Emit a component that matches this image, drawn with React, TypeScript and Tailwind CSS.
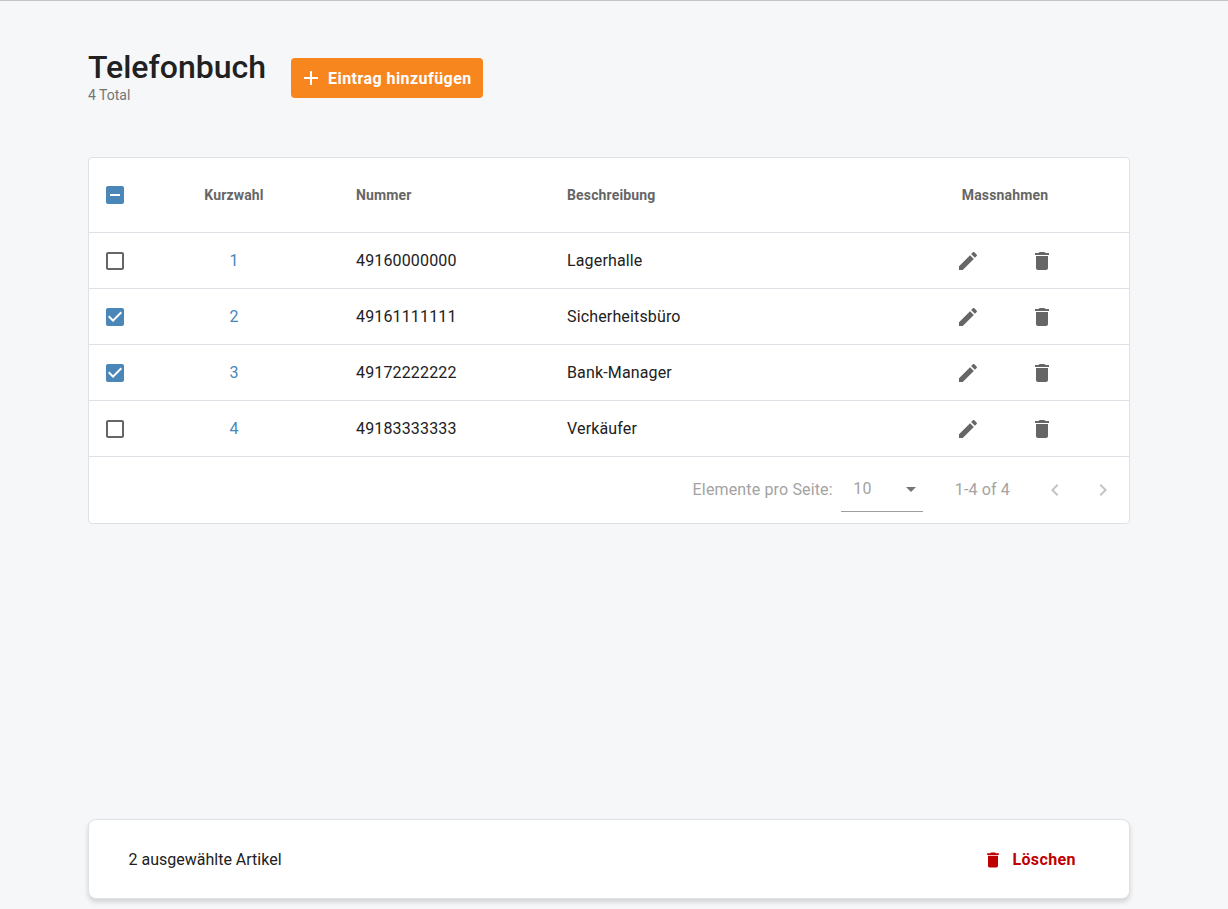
const ICONS = {
  plus: 'M19 13h-6v6h-2v-6H5v-2h6V5h2v6h6v2z',
  edit: 'M3 17.25V21h3.75L17.81 9.94l-3.75-3.75L3 17.25zM20.71 7.04c.39-.39.39-1.02 0-1.41l-2.34-2.34c-.39-.39-1.02-.39-1.41 0l-1.83 1.83 3.75 3.75 1.83-1.83z',
  trash: 'M6 19c0 1.1.9 2 2 2h8c1.1 0 2-.9 2-2V7H6v12zM19 4h-3.5l-1-1h-5l-1 1H5v2h14V4z',
  blank: 'M19 5v14H5V5h14m0-2H5c-1.1 0-2 .9-2 2v14c0 1.1.9 2 2 2h14c1.1 0 2-.9 2-2V5c0-1.1-.9-2-2-2z',
  checked: 'M19 3H5c-1.11 0-2 .9-2 2v14c0 1.1.89 2 2 2h14c1.11 0 2-.9 2-2V5c0-1.1-.89-2-2-2zm-9 14l-5-5 1.41-1.41L10 14.17l7.59-7.59L19 8l-9 9z',
  partial: 'M19 3H5c-1.1 0-2 .9-2 2v14c0 1.1.9 2 2 2h14c1.1 0 2-.9 2-2V5c0-1.1-.9-2-2-2zm-2 10H7v-2h10v2z',
  left: 'M15.41 7.41L14 6l-6 6 6 6 1.41-1.41L10.83 12z',
  right: 'M10 6L8.59 7.41 13.17 12l-4.58 4.59L10 18l6-6z',
  drop: 'M7 10l5 5 5-5z',
};

const Icon = ({ d, className }: { d: string; className: string }) => (
  <svg viewBox="0 0 24 24" className={className} fill="currentColor">
    <path d={d} />
  </svg>
);

const rows = [
  { id: 1, nummer: '49160000000', text: 'Lagerhalle', selected: false },
  { id: 2, nummer: '49161111111', text: 'Sicherheitsbüro', selected: true },
  { id: 3, nummer: '49172222222', text: 'Bank-Manager', selected: true },
  { id: 4, nummer: '49183333333', text: 'Verkäufer', selected: false },
];

const App = () => {
  return (
    <div className="min-h-[909px] bg-[#f6f7f9] border-t border-[#c4c4c4] font-['Roboto',sans-serif] text-[#212121] pl-[88px] pr-[98px] flex flex-col">
      {/* header */}
      <div className="flex items-start pt-[48px] h-[156px]">
        <div className="w-[203px]">
          <h1 className="text-[32px] leading-[36px] font-medium">Telefonbuch</h1>
          <p className="text-sm leading-[16px] text-[#757575] mt-[2px]">4 Total</p>
        </div>
        <button className="mt-[9px] h-[40px] w-[192px] flex items-center pl-[8px] rounded bg-[#f8861f] text-white text-base font-bold tracking-[0.45px]">
          <Icon d={ICONS.plus} className="w-6 h-6 mr-[5px]" />
          <span className="pt-px">Eintrag hinzufügen</span>
        </button>
      </div>

      {/* table */}
      <div className="bg-white border border-[#e0e1e6] rounded h-[367px] flex flex-col">
        <div className="h-[75px] shrink-0 flex items-center text-sm font-bold tracking-[0.15px] text-[#666666] border-b border-[#e0e1e6]">
          <div className="w-[75px] pl-[14px] shrink-0">
            <Icon d={ICONS.partial} className="w-6 h-6 text-[#4a86b8]" />
          </div>
          <div className="w-[140px] text-center shrink-0">Kurzwahl</div>
          <div className="w-[263px] pl-[52px] shrink-0">Nummer</div>
          <div className="w-[364px] shrink-0">Beschreibung</div>
          <div className="w-[148px] text-center shrink-0">Massnahmen</div>
        </div>
        {rows.map((row) => (
          <div key={row.id} className="h-[56px] shrink-0 flex items-center text-base tracking-[0.15px] border-b border-[#e0e1e6]">
            <div className="w-[75px] pl-[14px] shrink-0">
              <Icon
                d={row.selected ? ICONS.checked : ICONS.blank}
                className={row.selected ? 'w-6 h-6 text-[#4a86b8]' : 'w-6 h-6 text-[#666666]'}
              />
            </div>
            <div className="w-[140px] text-center shrink-0 text-[#4a86b8]">{row.id}</div>
            <div className="w-[263px] pl-[52px] shrink-0">{row.nummer}</div>
            <div className="w-[364px] shrink-0">{row.text}</div>
            <div className="w-[148px] flex shrink-0 text-[#666666]">
              <div className="w-[74px] flex justify-center">
                <Icon d={ICONS.edit} className="w-6 h-6" />
              </div>
              <div className="w-[74px] flex justify-center">
                <Icon d={ICONS.trash} className="w-6 h-6" />
              </div>
            </div>
          </div>
        ))}
        {/* pagination */}
        <div className="flex-1 flex items-center justify-end text-base tracking-[0.15px] text-[#a3a3a3]">
          <span className="mr-[8px]">Elemente pro Seite:</span>
          <div className="w-[82px] h-[44px] border-b border-[#9e9e9e] flex items-center justify-between pl-[12.5px] mt-[-1px]">
            <span>10</span>
            <Icon d={ICONS.drop} className="w-6 h-6 text-[#757575]" />
          </div>
          <span className="ml-[32px] mr-[33px]">1-4 of 4</span>
          <Icon d={ICONS.left} className="w-6 h-6 text-[#c4c4c4]" />
          <Icon d={ICONS.right} className="w-6 h-6 text-[#c4c4c4] ml-[24px] mr-[14px]" />
        </div>
      </div>

      {/* selection bar */}
      <div className="mt-[295px] h-[80px] bg-white border border-[#e0e1e6] rounded-lg shadow-[0_3px_5px_rgba(0,0,0,0.15)] flex items-center justify-between pt-[1px] pl-[39.5px] pr-[53px] text-base">
        <span>2 ausgewählte Artikel</span>
        <button className="flex items-center text-[#c00000] font-bold tracking-[0.4px]">
          <Icon d={ICONS.trash} className="w-5 h-5 mr-[9px]" />
          Löschen
        </button>
      </div>
    </div>
  );
};

export default App;
